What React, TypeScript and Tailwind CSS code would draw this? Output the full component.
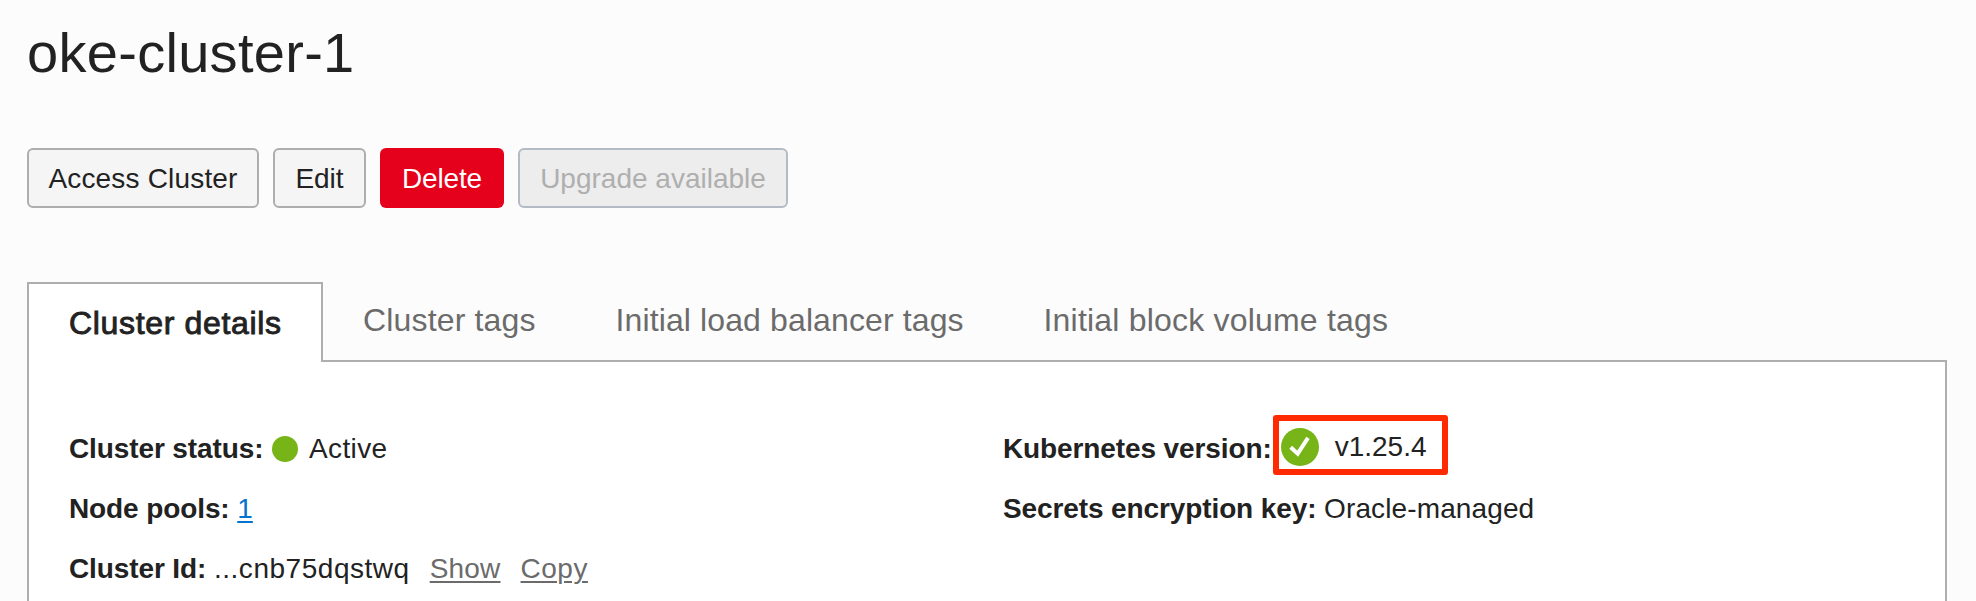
import React from "react";

const tabs = [
  { label: "Cluster tags", cls: "ml-[40px] w-[173px] tracking-[0.16px]" },
  { label: "Initial load balancer tags", cls: "ml-[79.5px] w-[349px] tracking-[0.12px]" },
  { label: "Initial block volume tags", cls: "ml-[79px] w-[346px] tracking-[0.2px]" },
];

function Field({ label, children }: { label: string; children: React.ReactNode }) {
  return (
    <div className="flex h-[60px] items-center whitespace-pre">
      <dt className="font-bold tracking-[-0.11px]">{label}</dt>
      <dd className="flex items-center">{children}</dd>
    </div>
  );
}

export default function App() {
  return (
    <main className="flex h-[601px] w-[1976px] flex-col overflow-hidden bg-[#fcfcfc] pl-[27px] font-['Liberation_Sans',Arial,sans-serif] text-[28px] text-[#222]">
      <h1 className="mt-[21px] h-[63px] shrink-0 whitespace-nowrap text-[56px] leading-[64px] tracking-[0.3px]">oke-cluster-1</h1>
      <div className="mt-[64px] flex h-[60px] shrink-0 gap-[14px] whitespace-nowrap">
        <button className="w-[232px] rounded-[6px] border-2 border-[#aeaeae] bg-[#f5f5f5] pt-[2px] tracking-[0.18px]">Access Cluster</button>
        <button className="w-[93px] rounded-[6px] border-2 border-[#aeaeae] bg-[#f5f5f5] pt-[2px]">Edit</button>
        <button className="w-[124px] rounded-[6px] bg-[#e5001b] pt-[2px] tracking-[-0.15px] text-white">Delete</button>
        <button className="w-[270px] rounded-[6px] border-2 border-[#b4bbc5] bg-[#ededed] pt-[2px] text-[#afafaf]">Upgrade available</button>
      </div>
      <nav className="relative z-10 mt-[74px] flex h-[80px] shrink-0 whitespace-nowrap text-[32px]">
        <div className="h-[80px] w-[296px] border-2 border-b-0 border-[#aeaeae] bg-white pl-[40px] leading-[78px] tracking-[0.66px] [-webkit-text-stroke:0.9px_#222]">
          Cluster details
        </div>
        {tabs.map((t) => (
          <div key={t.label} className={`leading-[76px] text-[#6b6b6b] ${t.cls}`}>{t.label}</div>
        ))}
      </nav>
      <section className="-mt-[2px] flex h-[260px] w-[1920px] shrink-0 border-2 border-[#aeaeae] bg-white pl-[40px] pt-[57px]">
        <dl className="w-[934px]">
          <Field label="Cluster status: ">
            <span className="ml-[1px] h-[26px] w-[26px] rounded-full bg-[#76b417]" />
            <span className="ml-[11px] tracking-[0.35px]">Active</span>
          </Field>
          <Field label="Node pools: ">
            <a className="text-[#0572ce] underline decoration-2 underline-offset-[3px]">1</a>
          </Field>
          <Field label="Cluster Id: ">
            <span className="tracking-[0.53px]">...cnb75dqstwq</span>
            <a className="ml-[20px] tracking-[0.2px] text-[#6b6b6b] underline decoration-2 underline-offset-[3px]">Show</a>
            <a className="ml-[20px] tracking-[0.5px] text-[#6b6b6b] underline decoration-2 underline-offset-[3px]">Copy</a>
          </Field>
        </dl>
        <dl>
          <Field label="Kubernetes version:">
            <span className="ml-[1px] flex h-[60px] w-[175px] -translate-y-[4px] items-center rounded-[3px] border-[6px] border-[#ff2a00] pl-[2px]">
              <svg className="mt-[3px]" width="38" height="38" viewBox="0 0 38 38" fill="none">
                <circle cx="19" cy="19" r="19" fill="#76b417" />
                <path d="M9.7 19.3 16.7 25.7 27 9.8" stroke="white" strokeWidth="4" />
              </svg>
              <span className="ml-[16px] mt-[4px]">v1.25.4</span>
            </span>
          </Field>
          <Field label="Secrets encryption key: ">
            <span className="tracking-[0.12px]">Oracle-managed</span>
          </Field>
        </dl>
      </section>
    </main>
  );
}
